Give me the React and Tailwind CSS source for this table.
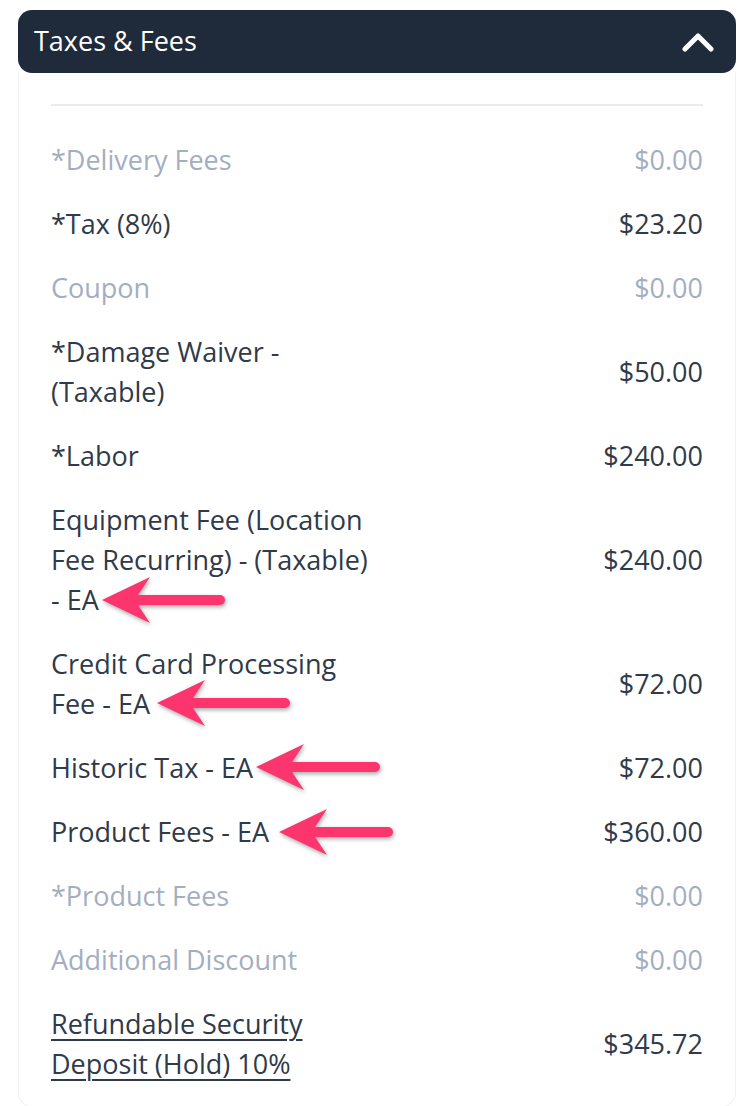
import React from 'react';

const rows = [
  { label: ['*Delivery Fees'], value: '$0.00', muted: true },
  { label: ['*Tax (8%)'], value: '$23.20' },
  { label: ['Coupon'], value: '$0.00', muted: true },
  { label: ['*Damage Waiver -', '(Taxable)'], value: '$50.00' },
  { label: ['*Labor'], value: '$240.00' },
  { label: ['Equipment Fee (Location', 'Fee Recurring) - (Taxable)', '- EA'], value: '$240.00' },
  { label: ['Credit Card Processing', 'Fee - EA'], value: '$72.00' },
  { label: ['Historic Tax - EA'], value: '$72.00' },
  { label: ['Product Fees - EA'], value: '$360.00' },
  { label: ['*Product Fees'], value: '$0.00', muted: true },
  { label: ['Additional Discount'], value: '$0.00', muted: true },
  { label: ['Refundable Security', 'Deposit (Hold) 10%'], value: '$345.72', link: true },
];

// annotation arrows: tip x/y, tail x
const arrows = [
  { x: 102, y: 600, end: 225 },
  { x: 157, y: 703, end: 290 },
  { x: 256, y: 767, end: 380 },
  { x: 279, y: 832, end: 393 },
];

const Arrow = ({ x, y, end }) => {
  const d = `M${x} ${y} L${x + 48} ${y - 23} L${x + 36} ${y - 5} L${end - 5} ${y - 5} A5 5 0 0 1 ${end - 5} ${y + 5} L${x + 36} ${y + 5} L${x + 48} ${y + 23} Z`;
  return <path d={d} fill="#fc356f" />;
};

const Row = ({ row }) => {
  const color = row.muted ? 'text-[#a3aec0]' : 'text-[#2f3a4a]';
  return (
    <div className={`flex items-center justify-between py-3 ${color}`}>
      <div className={row.link ? 'underline decoration-[1.5px] underline-offset-[5px]' : ''}>
        {row.label.map((line) => (
          <div key={line} className="whitespace-nowrap leading-[40px]">
            {line}
          </div>
        ))}
      </div>
      <div className="leading-[40px]">{row.value}</div>
    </div>
  );
};

export default function App() {
  return (
    <div className="relative min-h-[1106px] bg-white pt-[10px] pl-[18px] pr-[20px] font-['Open_Sans','Noto_Sans',sans-serif]">
      <div className="flex h-[63px] items-center justify-between rounded-[14px] bg-[#1f2a3b] pl-4 pr-[22px]">
        <span className="text-[27px] font-medium text-white">Taxes &amp; Fees</span>
        <svg width="32" height="22" viewBox="0 0 32 22" fill="none">
          <polyline
            points="3,18 16,5 29,18"
            stroke="white"
            strokeWidth="5"
            strokeLinecap="round"
            strokeLinejoin="round"
          />
        </svg>
      </div>
      <div className="rounded-b-[14px] border border-t-0 border-[#f0f1f3] px-8 pt-[31px] pb-[10px] text-[27px] font-normal">
        <div className="mb-[22px] h-[2px] bg-[#e9ebef]" />
        {rows.map((row) => (
          <Row key={row.label[0]} row={row} />
        ))}
      </div>
      <svg
        className="pointer-events-none absolute left-0 top-0 drop-shadow-[1px_2px_2px_rgba(0,0,0,0.35)]"
        width="756"
        height="1106"
      >
        {arrows.map((a) => (
          <Arrow key={a.y} {...a} />
        ))}
      </svg>
    </div>
  );
}
